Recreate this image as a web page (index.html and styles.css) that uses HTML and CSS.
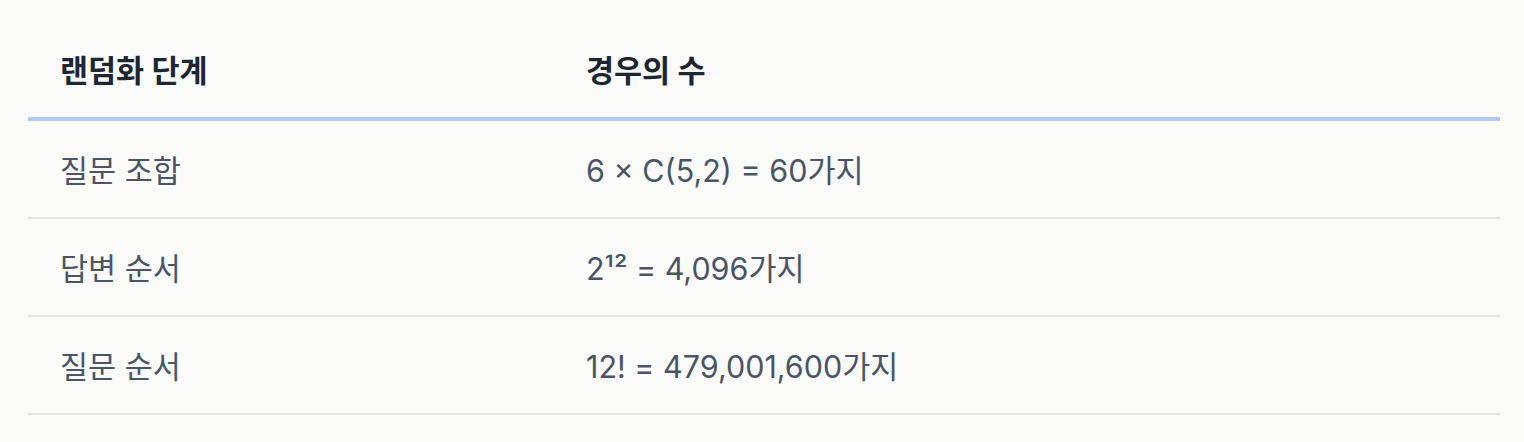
FILE: index.html
```html
<!DOCTYPE html>
<html lang="ko">
<head>
<meta charset="utf-8">
<link rel="stylesheet" href="styles.css">
</head>
<body>
<div class="wrap">
<table class="tbl">
<thead>
<tr><th class="c1">랜덤화 단계</th><th>경우의 수</th></tr>
</thead>
<tbody>
<tr><td class="c1">질문 조합</td><td>6 × C(5,2) = 60가지</td></tr>
<tr><td class="c1">답변 순서</td><td>2¹² = 4,096가지</td></tr>
<tr><td class="c1">질문 순서</td><td>12! = 479,001,600가지</td></tr>
</tbody>
</table>
</div>
</body>
</html>
```
FILE: styles.css
```css
html, body {
  margin: 0;
  background: #fafaf9;
}
.wrap {
  padding: 21px 24px 0 28px;
}
.tbl {
  width: 1472px;
  border-collapse: collapse;
  font-family: Inter, "Noto Sans CJK KR", sans-serif;
  font-size: 30.5px;
}
.tbl th, .tbl td {
  text-align: left;
  padding: 26px 32px 22px;
  line-height: 48px;
}
.tbl .c1 { width: 462px; }
.tbl th {
  font-weight: 700;
  color: #1f2633;
  border-bottom: 4px solid #b3c8f3;
}
.tbl td {
  color: #4a5464;
  border-bottom: 2px solid #e4e4e2;
}
```
